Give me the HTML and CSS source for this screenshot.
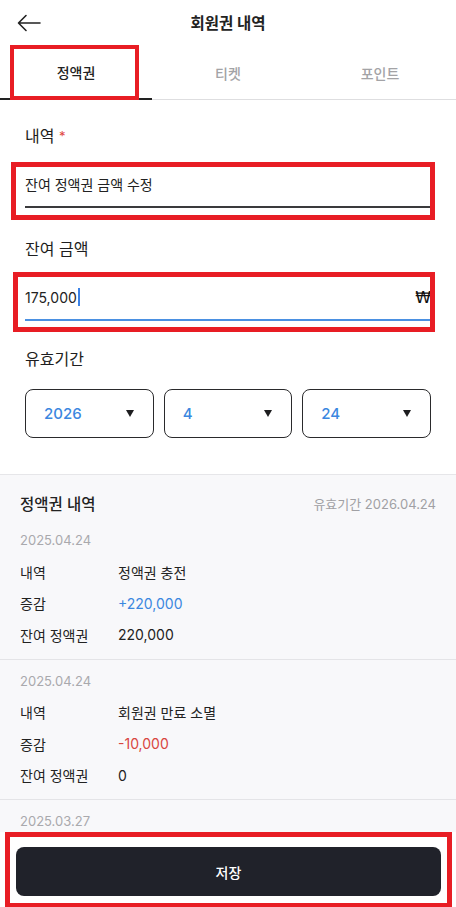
FILE: index.html
```html
<!DOCTYPE html>
<html lang="ko">
<head>
<meta charset="utf-8">
<title>회원권 내역</title>
<link rel="stylesheet" href="styles.css">
</head>
<body>
<div class="app">
  <header class="topbar">
    <button class="back" aria-label="뒤로">
      <svg width="24" height="18" viewBox="0 0 24 18" fill="none" stroke="#222" stroke-width="1.6" stroke-linecap="round" stroke-linejoin="round"><path d="M23 9H2M9 1.5L1.5 9L9 16.5"/></svg>
    </button>
    <h1 class="title">회원권 내역</h1>
  </header>
  <nav class="tabs">
    <div class="tab active">정액권</div>
    <div class="tab">티켓</div>
    <div class="tab">포인트</div>
  </nav>
  <main class="content">
    <section class="form">
      <div class="label">내역 <span class="req">*</span></div>
      <div class="field">잔여 정액권 금액 수정</div>
      <div class="label label-2">잔여 금액</div>
      <div class="field focus"><span class="value">175,000</span><span class="caret"></span><span class="won">₩</span></div>
      <div class="label label-3">유효기간</div>
      <div class="selects">
        <div class="select"><span>2026</span><span class="tri"></span></div>
        <div class="select"><span>4</span><span class="tri"></span></div>
        <div class="select"><span>24</span><span class="tri"></span></div>
      </div>
    </section>
    <section class="history">
      <div class="hist-head">
        <div class="hist-title">정액권 내역</div>
        <div class="hist-exp">유효기간 2026.04.24</div>
      </div>
      <div class="entry">
        <div class="date">2025.04.24</div>
        <div class="row"><span class="k">내역</span><span class="v">정액권 충전</span></div>
        <div class="row"><span class="k">증감</span><span class="v plus">+220,000</span></div>
        <div class="row"><span class="k">잔여 정액권</span><span class="v">220,000</span></div>
      </div>
      <div class="entry">
        <div class="date">2025.04.24</div>
        <div class="row"><span class="k">내역</span><span class="v">회원권 만료 소멸</span></div>
        <div class="row"><span class="k">증감</span><span class="v minus">-10,000</span></div>
        <div class="row"><span class="k">잔여 정액권</span><span class="v">0</span></div>
      </div>
      <div class="entry last">
        <div class="date">2025.03.27</div>
      </div>
    </section>
  </main>
  <footer class="footer">
    <button class="save">저장</button>
  </footer>
  <div class="mark mark-tab"></div>
  <div class="mark mark-f1"></div>
  <div class="mark mark-f2"></div>
  <div class="mark mark-foot"></div>
</div>
</body>
</html>
```
FILE: styles.css
```css
* { box-sizing: border-box; margin: 0; padding: 0; }
html, body { width: 456px; height: 907px; overflow: hidden; background: #fff; }
body {
  font-family: Inter, "Noto Sans CJK KR", sans-serif;
  color: #222;
}
.app {
  position: relative;
  width: 456px;
  height: 907px;
  display: flex;
  flex-direction: column;
  overflow: hidden;
}
.topbar {
  height: 44px;
  display: flex;
  align-items: center;
  justify-content: center;
  position: relative;
  flex: none;
}
.back {
  position: absolute;
  left: 17px;
  top: 14px;
  border: 0;
  background: none;
  display: flex;
}
.title { font-size: 15.5px; font-weight: 700; color: #222; }
.tabs {
  height: 56px;
  display: grid;
  grid-template-columns: repeat(3, 1fr);
  border-bottom: 1px solid #dedee0;
  flex: none;
}
.tab {
  display: flex;
  align-items: center;
  justify-content: center;
  font-size: 14px;
  font-weight: 500;
  color: #a3a3a6;
  margin-bottom: -1px;
  padding-top: 2px;
}
.tab.active { color: #222; border-bottom: 2px solid #222; }
.content { flex: 1; overflow: hidden; display: flex; flex-direction: column; }
.form { padding: 24px 25px 36px 25px; border-bottom: 1px solid #e6e6e9; }
.label { font-size: 16px; font-weight: 400; line-height: 24px; color: #1e1e20; }
.label-2 { margin-top: 29px; }
.label-3 { margin-top: 26px; }
.req { color: #e0463f; font-size: 13px; vertical-align: top; }
.field {
  margin-top: 14px;
  height: 46px;
  display: flex;
  align-items: center;
  font-size: 14px;
  color: #222;
  border-bottom: 2px solid #3a3a3c;
}
.field.focus { border-bottom-color: #4a90e2; }
.caret { width: 2px; height: 18px; background: #3b82e6; margin-left: 1px; }
.won { margin-left: auto; font-family: "DejaVu Sans", sans-serif; font-size: 16px; color: #111; }
.selects {
  margin-top: 18px;
  display: grid;
  grid-template-columns: repeat(3, 1fr);
  gap: 10px;
}
.select {
  height: 49px;
  border: 1.3px solid #2a2a2c;
  border-radius: 8px;
  display: flex;
  align-items: center;
  justify-content: space-between;
  padding: 0 19px 0 18px;
  font-size: 15px;
  font-weight: 500;
  color: #3b87e0;
}
.tri {
  width: 0; height: 0;
  border-left: 4.5px solid transparent;
  border-right: 4.5px solid transparent;
  border-top: 7px solid #1d1d1f;
}
.history { background: #f8f8fa; flex: 1; }
.hist-head {
  display: flex;
  justify-content: space-between;
  align-items: center;
  padding: 16px 20px 4px 20px;
  box-sizing: content-box;
  height: 24px;
}
.hist-title { font-size: 15.5px; font-weight: 500; color: #222; }
.hist-exp { font-size: 13px; color: #a0a0a4; }
.entry { padding: 6px 20px 8px 20px; border-bottom: 1px solid #e4e4e7; }
.entry.last { border-bottom: 0; }
.date { height: 31px; line-height: 31px; font-size: 13px; color: #a9a9ad; }
.row { height: 31.5px; display: flex; align-items: center; font-size: 14px; color: #222; }
.k { width: 98px; flex: none; }
.v.plus { color: #3b87e0; }
.v.minus { color: #d9463f; }
.footer {
  flex: none;
  height: 75px;
  background: #fff;
  padding: 15px 15px 11px 16px;
}
.save {
  width: 100%;
  height: 49px;
  border: 0;
  border-radius: 8px;
  background: #20222a;
  color: #fff;
  font-family: Inter, "Noto Sans CJK KR", sans-serif;
  font-size: 14px;
  font-weight: 500;
}
.mark { position: absolute; border: 5px solid #e81d24; pointer-events: none; }
.mark-tab { left: 10px; top: 45px; width: 129px; height: 55px; border-width: 4.5px; }
.mark-f1 { left: 11px; top: 162px; width: 424px; height: 58px; }
.mark-f2 { left: 13px; top: 272px; width: 422px; height: 60px; }
.mark-foot { left: 5px; top: 832px; width: 447px; height: 76px; }
```
